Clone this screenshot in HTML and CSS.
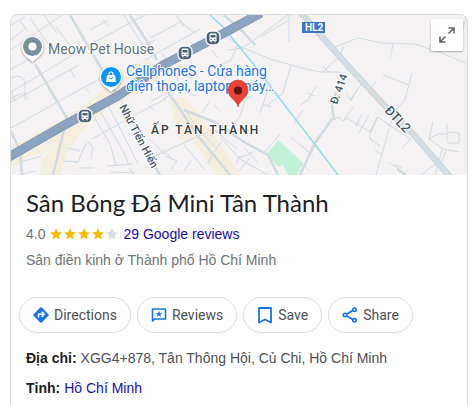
FILE: index.html
```html
<!doctype html>
<html lang="vi">

<head>
	<meta charset="utf-8">
	<meta name="viewport" content="width=device-width, initial-scale=1">
	<title>Sân Bóng Đá Mini Tân Thành</title>
	<link rel="stylesheet" href="styles.css">
</head>

<body>

	<main class="card">

		<div class="map">
			<svg class="map-image" viewBox="11 15 456 160" preserveAspectRatio="xMidYMid slice" role="img" aria-label="Map">
				<defs>
					<symbol id="bus" viewBox="0 0 16 16">
						<rect x="1" y="1" width="14" height="14" rx="5" fill="#4b6478" stroke="#fff" stroke-width="1.3"/>
						<path d="M4.5 4.5q0-1 1-1h5q1 0 1 1v6.5h-.8v1.3H9.4V11H6.6v1.3H5.3V11h-.8z" fill="#fff"/>
						<path d="M5.5 5h5v2.6h-5zM5.5 9h1.3v1H5.500zM9.200 9h1.300v1H9.200z" fill="#4b6478"/>
					</symbol>
				</defs>

				<rect x="11" y="15" width="456" height="160" fill="#f4f2f3"/>

				<!-- Built-up areas -->
				<path class="area" d="M11 147L38 132 65 118 92 99 108 85 120 70 145 61 151 61 162 76 150 87 128 98 110 107 94 120 80 134 73 144 65 157 61 175H40L41 161 50 151 29 156 11 170z"/>
				<path class="area" d="M170 100L184 97 198 112 214 136 228 154 240 175H215L202 154 192 140 180 142 176 127z"/>
				<path class="park" d="M278 140L303 163 297 175H288L283 165 278 167 267 154z"/>

				<!-- Small streets -->
				<g class="street">
					<path d="M11 50L62 15M11 40L26 28 19 20M22 26L28 31M11 25l14-8M44 15L57 33M30 18L48 44M11 92L91 44 145 15"/>
					<path d="M39 54L11 69M11 78q12-5 14 5v17M56 27l20 27M90 30l18-10M103 20l5 6M124 15l24 39M137 49l18-9M70 69l5 9M11 102l17-9 51-28M85 88l4 4M11 128l68-38 25-13M11 91l4 10M24 92l4 7"/>
					<path d="M145 60l25-14 30-17M150 38l12-6 20-11M182 23l13 10M176 15l8 12M212 50l6 8M191 42l5 9M162 53l23 39 11 4"/>
					<path d="M288 15L243 48 228 50M243 48l27 11 32 9 18 4h18l9 4M237 46l-6 14-15 7M262 36l27-16M289 15v27M243 48l-18-12M291 65l-8 28-15 12"/>
					<path d="M335 47l23-9 24 5 33 1 26 9 25 10M393 44l-3 15M430 44v9M344 46l-4 10-13 12-4 4M323 66l6 6M362 83l-12 17M383 75l26 10M412 73l-7 27-9 10-7 17M389 129l-13 46M466 17l-4 16M376 81l-6 8"/>
					<path d="M334 120l4-3 5 4 4-3 8 5 16 9 7-15 14 10 19 12-9 9M377 117l-7 15v7l10 7M353 107l-9 13M362 114l-6 12M369 115l-10 18M375 150l7 5M388 162l11 7M402 168l-8-4M433 121l-4 18 9-5h9M447 124v17M447 132l12 1v10h-12M429 139l14 10 16 3M442 150l-7 25M446 151l-6 14M436 164l-15 11M300 105l8-5 8-14M307 93l8 3M346 92l5 9 5-10"/>
					<path d="M93 115l17 29 6 21M99 109l24 42 6 14M108 105l21 41 9 18M120 98l27 50 11 22M92 139l25-14 29-16 20-10M87 141l-9 21-15-1M88 141l5 7-2 11M68 148l12 3M78 163l-5-2M79 168h15M107 166l26-2M111 172l24 1M11 98l12-5M21 162l20-6M22 174l14-3M134 174l-5-6"/>
					<path d="M151 101l22-11M148 106l6 4M163 99l10-6M185 110l10 15 20 22M210 101l-8 12M214 105l6 6M220 137l20 22 28 16M248 91l-8 25-12 17M239 103l13-7M260 113l8-23M262 104l9 3M280 134l-15 18M291 137l19 16M303 110l-9 14M301 145l12 11M300 163l10 8"/>
					<path d="M155 156l35-16 18-8M162 149l9 9M165 156l12 5-6 8M184 145l21 25M191 161l-7 10M213 153l-5 11M237 159l16-7M244 148l14 15M236 164l4-8M211 127l26 22M222 141l-10 13M250 158l-12 14M150 139l15 16"/>
				</g>

				<!-- Middle size roads -->
				<g class="road">
					<path d="M70 15l25 43 23 38M35 64l33 56M64 130L53 175M11 131l9 20 2 24M130 15l18 28 9 17"/>
					<path d="M168 92l30 44 32 39M184 110l31 12 29 20 24 13 10 20M332 119l-17 24-8 17-7 15M334 120l-2-13 4-15M397 169l9 6M155 167l5 8"/>
				</g>
				<path d="M224 15l18 16 13 14" class="road"/>

				<path class="canal" d="M210 15l13 12 37 45 13 18 37 48 28 37"/>
				<path class="road-main-edge" d="M300 12l50 56 34 37 30 30 38 44"/>
				<path class="road-main" d="M300 12l50 56 34 37 30 30 38 44"/>
				<path class="highway-edge" d="M7 158l54-31 57-31 45-31 50-26 48-26"/>
				<path class="highway" d="M7 158l54-31 57-31 45-31 50-26 48-26"/>

				<use href="#bus" x="77" y="108" width="16" height="16"/>
				<use href="#bus" x="177" y="45" width="16" height="16"/>
				<use href="#bus" x="205" y="30" width="16" height="16"/>

				<rect x="302" y="22" width="23" height="11" fill="#3c74c8"/>
				<text class="map-sign" x="305" y="31">HL2</text>

				<!-- Places -->
				<path class="place" d="M32.500 62c-3-3-11-7-11-15a11 11 0 0 1 22 0c0 8-8 12-11 15z"/>
				<circle cx="32.500" cy="46.500" r="9.500" fill="#78909c"/>
				<circle cx="32.500" cy="46.500" r="4" fill="#fff"/>
				<text class="map-label" x="48" y="54">Meow Pet House</text>

				<path class="place" d="M111 92c-3-3-11-7-11-15a11 11 0 0 1 22 0c0 8-8 12-11 15z"/>
				<circle cx="111" cy="77" r="10" fill="#0a94fb"/>
				<path d="M107 75h8l1 7h-10z" fill="#fff"/>
				<path d="M109 76v-2a2 2 0 0 1 4 0v2M109 78q2 2.500 4 0" fill="none" stroke="#fff" stroke-width="1.200"/>
				<path d="M109 77.500q2 3 4 0" fill="none" stroke="#0a94fb"/>
				<text class="map-label map-label-blue" x="126" y="76">CellphoneS - Cửa hàng</text>
				<text class="map-label map-label-blue" x="126" y="91">điện thoại, laptop, máy…</text>

				<text class="map-area" x="151" y="134">ẤP TÂN THÀNH</text>
				<text class="map-street" transform="translate(119 107) rotate(62)">Nhữ Tiến Hiến</text>
				<text class="map-street" transform="translate(337 105) rotate(-70)">Đ. 414</text>
				<text class="map-street map-street-big" transform="translate(384 111) rotate(47)">ĐTL2</text>

				<!-- Pin -->
				<path d="M238 107c-1-7-10-9-10-17a10 10 0 0 1 20 0c0 8-9 10-10 17z" fill="#ea4335" stroke="#c5221f" stroke-width=".5"/>
				<circle cx="238" cy="90.500" r="4" fill="#5c1410"/>
			</svg>

			<button class="map-expand" type="button" aria-label="Expand map">
				<svg width="18" height="18" viewBox="0 0 18 18" fill="none" stroke="#666" stroke-width="1.600">
					<path d="M10.500 7.500L16 2M10.500 2H16v5.500M7.500 10.500L2 16M2 10.500V16h5.500"/>
				</svg>
			</button>
		</div>

		<div class="info">
			<h1 class="title">Sân Bóng Đá Mini Tân Thành</h1>
			<div class="rating">
				<span>4.0</span>
				<svg class="stars" width="68" height="12" viewBox="0 0 68 12" role="img" aria-label="4.0 / 5">
					<defs>
						<path id="star" d="M6 0l1.600 4.100 4.400.3-3.400 2.800 1.100 4.300L6 9.200l-3.700 2.300 1.100-4.300L0 4.400l4.400-.3z"/>
					</defs>
					<g fill="#fbbc04">
						<use href="#star"/>
						<use href="#star" x="14"/>
						<use href="#star" x="28"/>
						<use href="#star" x="42"/>
					</g>
					<use href="#star" x="56" fill="#dadce0"/>
				</svg>
				<a class="link" href="#">29 Google reviews</a>
			</div>
			<p class="category">Sân điền kinh ở Thành phố Hồ Chí Minh</p>
		</div>

		<div class="actions">
			<button class="action" type="button">
				<svg width="16" height="16" viewBox="0 0 16 16">
					<path d="M7.200.6q.8-.8 1.600 0l6.600 6.600q.8.8 0 1.600l-6.600 6.600q-.8.8-1.600 0L.6 8.800q-.8-.8 0-1.600z" fill="#1a73e8"/>
					<path d="M5.500 10.500V7.300h5M8.700 4.800l2.500 2.500-2.500 2.500" fill="none" stroke="#fff" stroke-width="1.500"/>
				</svg>
				Directions
			</button>
			<button class="action" type="button">
				<svg width="16" height="16" viewBox="0 0 16 16">
					<path d="M1.500 14V2h13v10H3.500z" fill="none" stroke="#1a73e8" stroke-width="1.600" stroke-linejoin="round"/>
					<path d="M8 3.700l.9 2.200 2.300.2-1.800 1.500.6 2.300-2-1.300-2 1.300.6-2.300-1.800-1.500 2.300-.2z" fill="#1a73e8"/>
				</svg>
				Reviews
			</button>
			<button class="action" type="button">
				<svg width="16" height="18" viewBox="0 0 16 18">
					<path d="M2 2h12v14.500l-6-3-6 3z" fill="none" stroke="#1a73e8" stroke-width="1.800" stroke-linejoin="round"/>
				</svg>
				Save
			</button>
			<button class="action" type="button">
				<svg width="16" height="16" viewBox="0 0 16 16" fill="none" stroke="#1a73e8" stroke-width="1.600">
					<path d="M4.500 7.200l6.500-4M4.500 8.800l6.500 4"/>
					<circle cx="3" cy="8" r="1.700"/>
					<circle cx="12.500" cy="2.700" r="1.700"/>
					<circle cx="12.500" cy="13.300" r="1.700"/>
				</svg>
				Share
			</button>
		</div>

		<dl class="details">
			<div>
				<dt>Địa chỉ:</dt>
				<dd>XGG4+878, Tân Thông Hội, Củ Chi, Hồ Chí Minh</dd>
			</div>
			<div>
				<dt>Tỉnh:</dt>
				<dd><a class="link" href="#">Hồ Chí Minh</a></dd>
			</div>
		</dl>

	</main>

</body>
</html>
```

FILE: styles.css
```css
:root {
	--font-family: 'Liberation Sans', Arial, sans-serif;
	--font-family-heading: Lato, sans-serif;
	--font-family-map: Roboto, sans-serif;
	--color: #202124;
	--color-grey: #4d5156;
	--color-grey-light: #70757a;
	--color-link: #1a0dab;
	--border: #dadce0;
}

*,
::after,
::before {
	box-sizing: border-box;
	margin: 0;
	padding: 0;
}

body {
	padding: 14px 8px 0 10px;
	color: var(--color);
	font: 400 14px/20px var(--font-family);
	background: #fff;
}

.card {
	border: 1px solid var(--border);
	border-bottom: 0;
	border-radius: 8px 8px 0 0;
	overflow: hidden;
}

/* Map: */

.map {
	position: relative;
	height: 160px;
}

.map-image {
	display: block;
	width: 100%;
	height: 100%;
}

.area { fill: #f6eedc; }
.park { fill: #c3f1d5; }

.street,
.road,
.canal,
.road-main,
.road-main-edge,
.highway,
.highway-edge {
	fill: none;
	stroke: #cfdae2;
}

.road { stroke-width: 2.5; }
.canal { stroke: #8fdcee; stroke-width: 1.5; }
.road-main { stroke: #d3dee4; stroke-width: 5; }
.road-main-edge { stroke: #bccad3; stroke-width: 6; }
.highway { stroke: #8aa4c1; stroke-width: 8; }
.highway-edge { stroke: #7591b3; stroke-width: 9; }

.place {
	fill: #fff;
	filter: drop-shadow(0 1px 1px rgba(0, 0, 0, .35));
}

.map-label,
.map-area,
.map-street {
	fill: #5b7480;
	stroke: #fff;
	stroke-width: 2px;
	stroke-linejoin: round;
	paint-order: stroke;
	font: 400 14px var(--font-family-map);
}

.map-label-blue {
	fill: #1a73e8;
}

.map-area {
	fill: #37393d;
	font-size: 12px;
	font-weight: 500;
	letter-spacing: 2px;
}

.map-street {
	fill: #42566b;
	font-size: 11px;
	font-weight: 500;
}

.map-street-big {
	font-size: 13px;
}

.map-sign {
	fill: #fff;
	font: 700 10px var(--font-family-map);
}

.map-expand {
	position: absolute;
	top: 4px;
	right: 4px;
	display: grid;
	place-items: center;
	width: 32px;
	height: 32px;
	background: #fff;
	border: 0;
	border-radius: 2px;
	box-shadow: 0 1px 2px rgba(0, 0, 0, .3);
	cursor: pointer;
}

/* Title and rating: */

.info {
	padding: 12px 15px 0;
}

.title {
	font: 400 24px/32px var(--font-family-heading);
}

.rating {
	display: flex;
	align-items: center;
	gap: 5px;
	margin-top: 5px;
	color: var(--color-grey-light);
}

.link {
	color: var(--color-link);
	text-decoration: none;
}

.link:hover {
	text-decoration: underline;
}

.category {
	margin-top: 6px;
	color: var(--color-grey-light);
}

/* Buttons: */

.actions {
	display: flex;
	flex-wrap: wrap;
	gap: 6px;
	padding: 27px 8px 0;
}

.action {
	display: flex;
	align-items: center;
	gap: 5px;
	height: 36px;
	padding: 0 13px;
	color: var(--color-grey);
	font: 400 14px/20px Roboto, var(--font-family);
	background: #fff;
	border: 1px solid var(--border);
	border-radius: 18px;
	cursor: pointer;
}

/* Address: */

.details {
	padding: 15px 15px 0;
}

.details div {
	display: flex;
	gap: 4px;
	margin-bottom: 10px;
}

.details dt {
	font-weight: 700;
}

.details dd {
	color: var(--color-grey);
}
```
